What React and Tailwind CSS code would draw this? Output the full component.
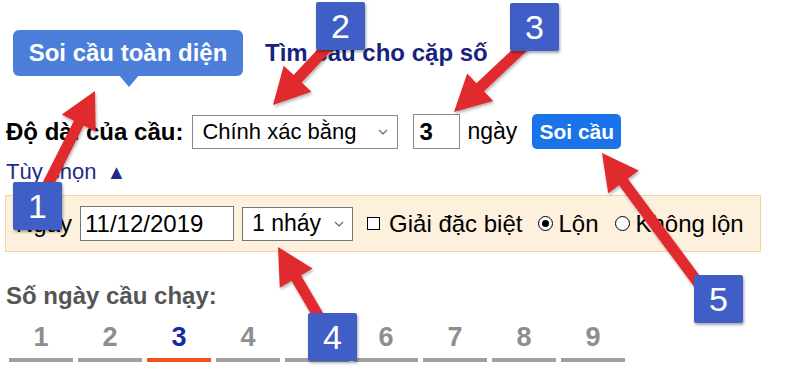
import React from "react";

const font = { fontFamily: '"Liberation Sans", Arial, sans-serif' };

const arrows = [
  [42, 196, 95, 91],
  [332, 42, 273, 105],
  [524, 46, 454, 112],
  [322, 322, 278, 247],
  [702, 288, 602, 153],
];

const badges = [
  { n: 1, cls: "left-[13px] top-[182px]" },
  { n: 2, cls: "left-[316px] top-[2px]" },
  { n: 3, cls: "left-[510px] top-[3px]" },
  { n: 4, cls: "left-[308px] top-[313px]" },
  { n: 5, cls: "left-[694px] top-[275px]" },
];

function arrowPoints([x1, y1, x2, y2], w = 11, hl = 36, hw = 38) {
  const len = Math.hypot(x2 - x1, y2 - y1);
  const dx = (x2 - x1) / len;
  const dy = (y2 - y1) / len;
  const px = -dy;
  const py = dx;
  const bx = x2 - dx * hl;
  const by = y2 - dy * hl;
  const pts = [
    [x1 + (px * w) / 2, y1 + (py * w) / 2],
    [bx + (px * w) / 2, by + (py * w) / 2],
    [bx + (px * hw) / 2, by + (py * hw) / 2],
    [x2, y2],
    [bx - (px * hw) / 2, by - (py * hw) / 2],
    [bx - (px * w) / 2, by - (py * w) / 2],
    [x1 - (px * w) / 2, y1 - (py * w) / 2],
  ];
  return pts.map((p) => p.map((v) => v.toFixed(1)).join(",")).join(" ");
}

function Chevron() {
  return (
    <svg width="10" height="6" viewBox="0 0 10 6" className="ml-auto">
      <path d="M1 1 L5 5 L9 1" fill="none" stroke="#666" strokeWidth="1.2" />
    </svg>
  );
}

const tabs = [1, 2, 3, 4, 5, 6, 7, 8, 9];

export default function App() {
  return (
    <div style={font} className="relative w-[800px] h-[380px] overflow-hidden bg-white text-black">
      {/* heading row */}
      <div className="flex items-center pt-[30px] pl-[13px]">
        <div className="relative">
          <div className="w-[230px] h-[46px] rounded-md bg-[#4a7ed8] text-white font-bold text-[24px] flex items-center justify-center">
            Soi cầu toàn diện
          </div>
          <div className="absolute left-[105px] top-[44px] w-0 h-0 border-x-[11px] border-x-transparent border-t-[13px] border-t-[#4a7ed8]" />
        </div>
        <span className="ml-[22px] text-[24px] font-bold text-[#17237f]">Tìm cầu cho cặp số</span>
      </div>

      {/* length row */}
      <div className="flex items-center mt-[38px] pl-[6px] h-[35px]">
        <span className="text-[24px] font-bold leading-[28px]">Độ dài của cầu:</span>
        <div className="ml-[9px] w-[206px] h-[34px] border border-[#8a8a8a] flex items-center pl-[9px] pr-[9px] text-[22px]">
          Chính xác bằng
          <Chevron />
        </div>
        <div className="ml-[15px] w-[47px] h-[35px] border border-[#8a8a8a] flex items-center pl-[5px] text-[24px] font-bold">
          3
        </div>
        <span className="ml-[7px] text-[23px]">ngày</span>
        <button className="ml-[15px] w-[89px] h-[35px] rounded-[5px] bg-[#1a73e8] text-white font-bold text-[21px]">
          Soi cầu
        </button>
      </div>

      <div className="mt-[11px] h-[24px] pl-[6px] text-[22px] leading-[24px] text-[#1f2b86] flex items-center gap-[10px]">
        Tùy chọn <span className="text-[20px]">▲</span>
      </div>

      {/* options panel */}
      <div className="ml-[5px] mt-[11px] w-[756px] h-[57px] bg-[#fdf0dd] border border-[#f5d2a2] flex items-center pl-[10px] text-[24px]">
        <span>Ngày</span>
        <div className="ml-[8px] w-[154px] h-[35px] bg-white border border-[#767676] flex items-center pl-[4px]">11/12/2019</div>
        <div className="ml-[8px] w-[111px] h-[34px] bg-white border border-[#767676] flex items-center pl-[9px] pr-[8px] text-[23px]">
          1 nháy
          <Chevron />
        </div>
        <span className="ml-[14px] w-[13px] h-[13px] border border-black bg-white" />
        <span className="ml-[9px]">Giải đặc biệt</span>
        <span className="ml-[16px] w-[15px] h-[15px] rounded-full border border-black bg-white flex items-center justify-center">
          <span className="w-[7px] h-[7px] rounded-full bg-black" />
        </span>
        <span className="ml-[5px]">Lộn</span>
        <span className="ml-[17px] w-[15px] h-[15px] rounded-full border border-black bg-white" />
        <span className="ml-[5px]">Không lộn</span>
      </div>

      <div className="mt-[31px] h-[26px] leading-[26px] pl-[6px] text-[24px] font-bold text-[#555]">Số ngày cầu chạy:</div>

      <div className="flex gap-[5px] pl-[9px] mt-[13px]">
        {tabs.map((t) => (
          <div key={t} className="w-[64px] flex flex-col items-center">
            <span className={`text-[27px] font-bold leading-[30px] ${t === 3 ? "text-[#1729a8]" : "text-[#8e8e8e]"}`}>{t}</span>
            <span className={`mt-[6px] w-full h-[4px] ${t === 3 ? "bg-[#f0501c]" : "bg-[#a0a0a0]"}`} />
          </div>
        ))}
      </div>

      {/* annotation overlay */}
      <svg className="absolute inset-0 pointer-events-none" width="800" height="380">
        <defs>
          <filter id="sh" x="-20%" y="-20%" width="140%" height="140%">
            <feDropShadow dx="1" dy="2" stdDeviation="1.5" floodColor="#000" floodOpacity="0.3" />
          </filter>
        </defs>
        {arrows.map((a, i) => (
          <polygon key={i} points={arrowPoints(a)} fill="#e0292f" filter="url(#sh)" />
        ))}
      </svg>
      {badges.map((b) => (
        <div
          key={b.n}
          className={`absolute ${b.cls} w-[49px] h-[48px] rounded-[2px] bg-[#3f5fc6] text-white text-[34px] flex items-center justify-center shadow-[1px_2px_3px_rgba(0,0,0,0.35)]`}
        >
          {b.n}
        </div>
      ))}
    </div>
  );
}
